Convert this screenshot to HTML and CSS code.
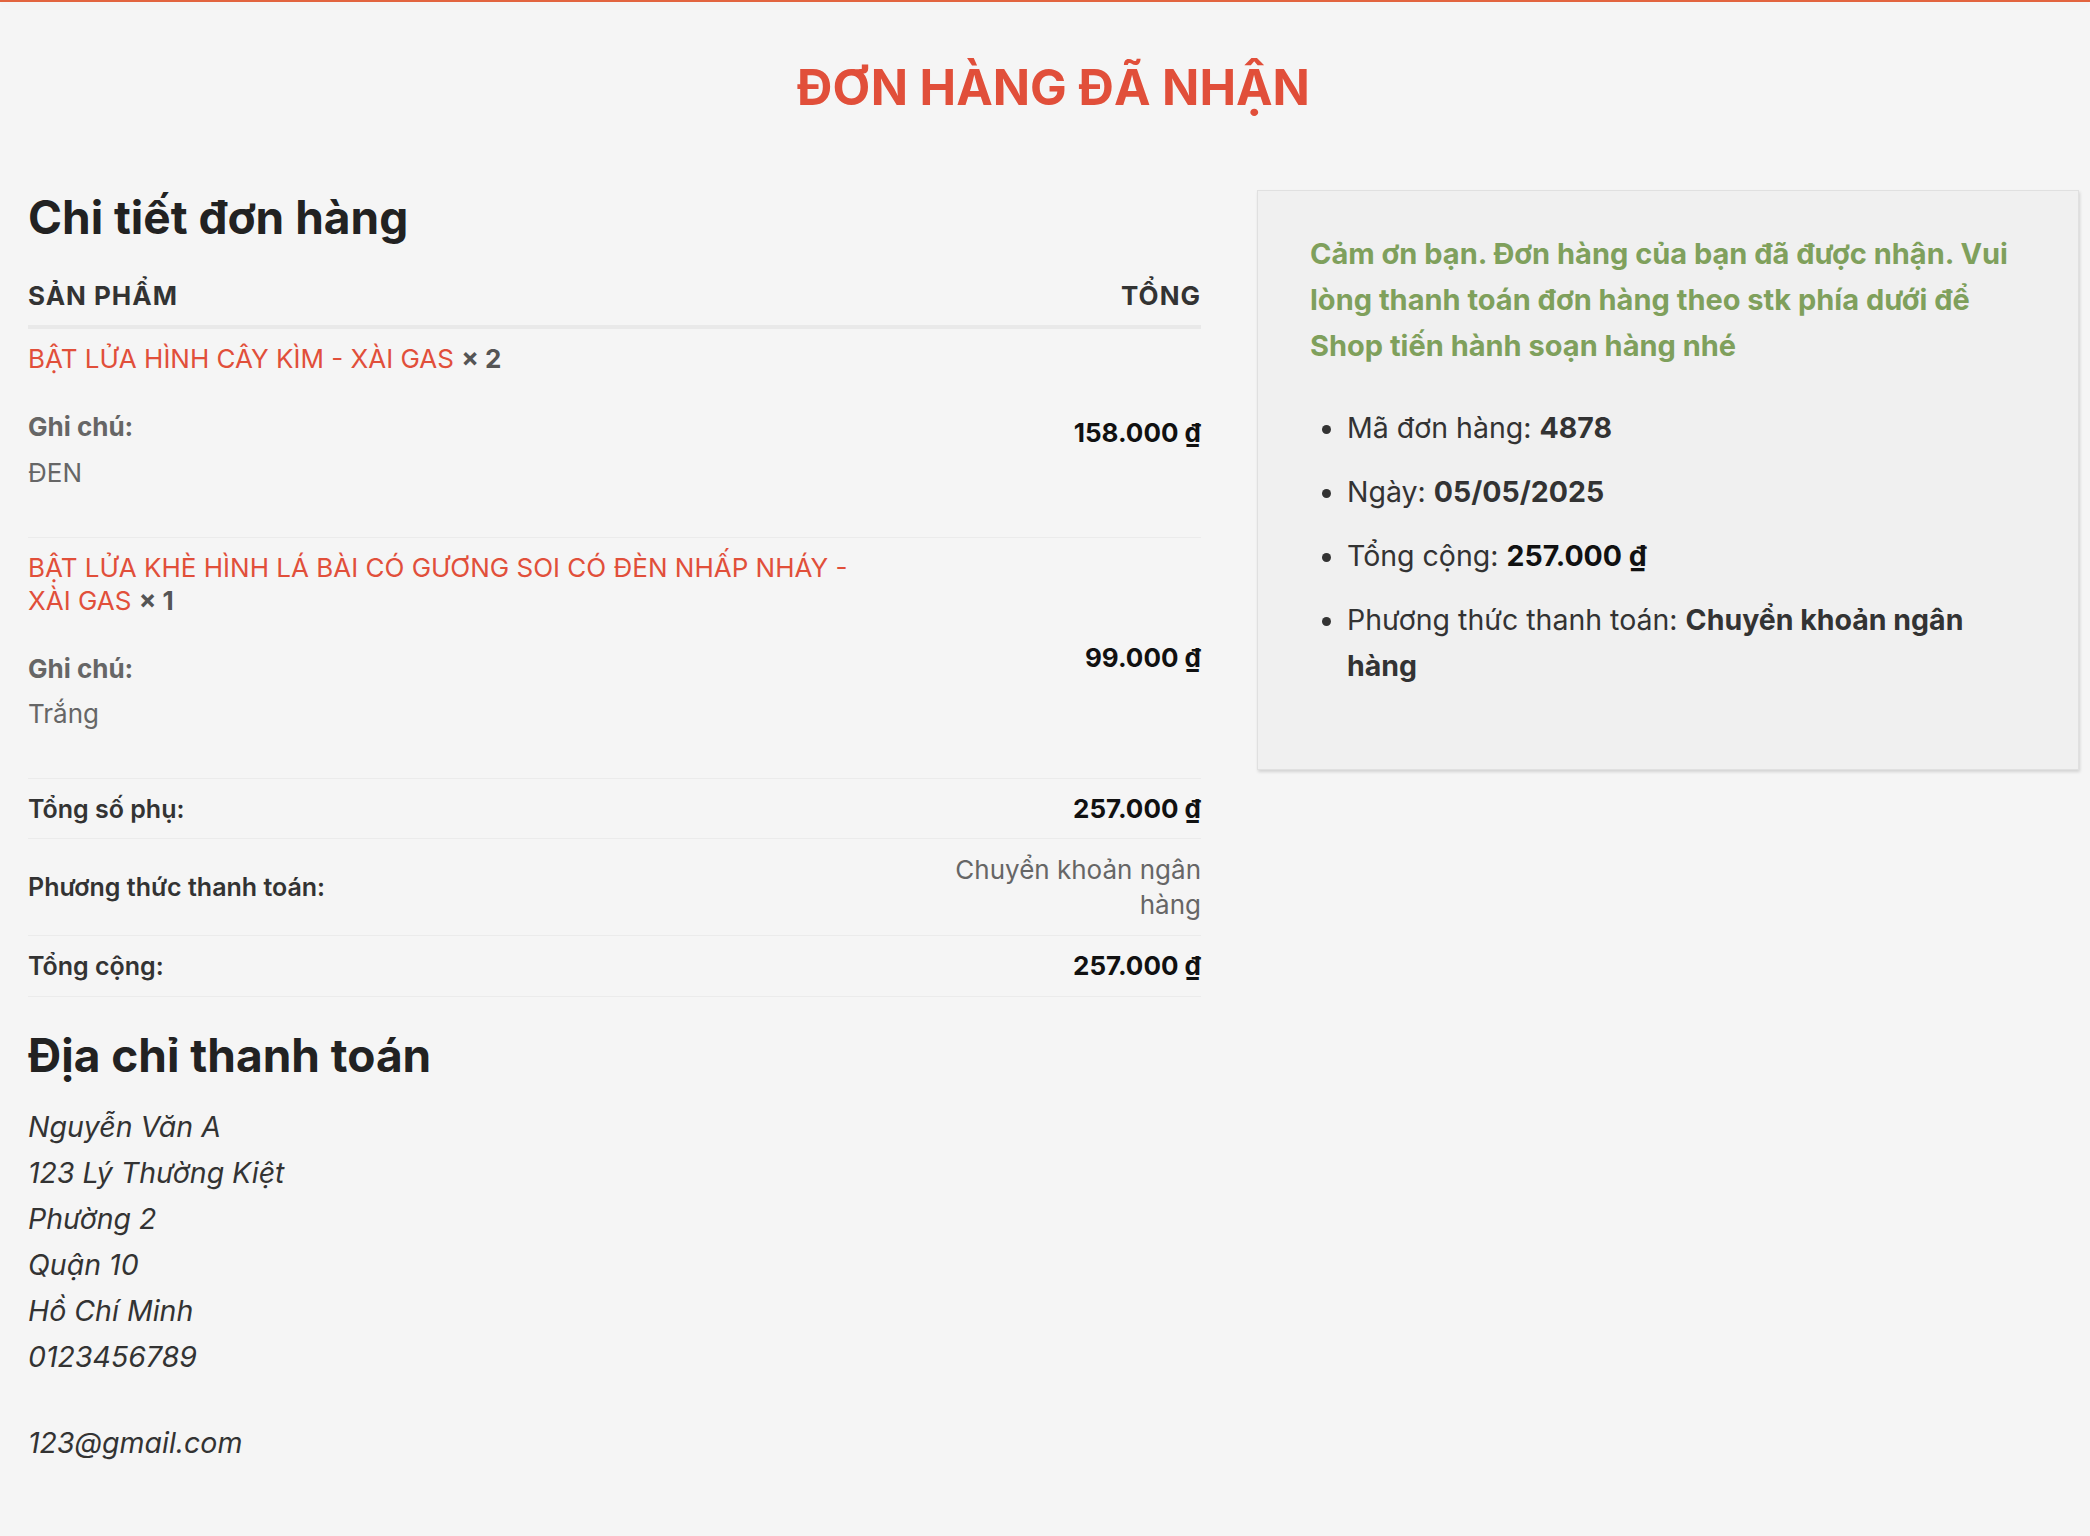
FILE: index.html
```html
<!DOCTYPE html>
<html lang="vi">
<head>
  <meta charset="UTF-8" />
  <meta name="viewport" content="width=device-width, initial-scale=1.0"/>
  <title>Đơn hàng đã nhận</title>
  <link rel="stylesheet" href="styles.css">
</head>
<body>
  <div class="topbar"></div>

  <div class="page">
    <h1 class="page-title">ĐƠN HÀNG ĐÃ NHẬN</h1>

    <div class="order-layout">
      <div class="order-details">
        <h2>Chi tiết đơn hàng</h2>
        <table class="order-table">
          <thead>
            <tr>
              <th class="col-name">Sản phẩm</th>
              <th class="col-total">Tổng</th>
            </tr>
          </thead>
          <tbody>
            <tr class="order-item">
              <td class="col-name">
                <a href="#">BẬT LỬA HÌNH CÂY KÌM - XÀI GAS</a> <strong class="qty">×&nbsp;2</strong>
                <ul class="item-meta">
                  <li><strong>Ghi chú:</strong><p>ĐEN</p></li>
                </ul>
              </td>
              <td class="col-total"><span class="amount">158.000&nbsp;₫</span></td>
            </tr>
            <tr class="order-item">
              <td class="col-name">
                <a href="#">BẬT LỬA KHÈ HÌNH LÁ BÀI CÓ GƯƠNG SOI CÓ ĐÈN NHẤP NHÁY - XÀI GAS</a> <strong class="qty">×&nbsp;1</strong>
                <ul class="item-meta">
                  <li><strong>Ghi chú:</strong><p>Trắng</p></li>
                </ul>
              </td>
              <td class="col-total"><span class="amount">99.000&nbsp;₫</span></td>
            </tr>
          </tbody>
          <tfoot>
            <tr>
              <th>Tổng số phụ:</th>
              <td><span class="amount">257.000&nbsp;₫</span></td>
            </tr>
            <tr>
              <th>Phương thức thanh toán:</th>
              <td class="muted">Chuyển khoản ngân hàng</td>
            </tr>
            <tr>
              <th>Tổng cộng:</th>
              <td><span class="amount">257.000&nbsp;₫</span></td>
            </tr>
          </tfoot>
        </table>

        <h2>Địa chỉ thanh toán</h2>
        <address class="billing">
          Nguyễn Văn A<br>
          123 Lý Thường Kiệt<br>
          Phường 2<br>
          Quận 10<br>
          Hồ Chí Minh<br>
          0123456789
          <p class="billing-email">123@gmail.com</p>
        </address>
      </div>

      <div class="order-summary">
        <p class="thankyou">Cảm ơn bạn. Đơn hàng của bạn đã được nhận. Vui lòng thanh toán đơn hàng theo stk phía dưới để Shop tiến hành soạn hàng nhé</p>
        <ul class="overview">
          <li>Mã đơn hàng: <strong>4878</strong></li>
          <li>Ngày: <strong>05/05/2025</strong></li>
          <li>Tổng cộng: <strong class="amount">257.000&nbsp;₫</strong></li>
          <li>Phương thức thanh toán: <strong>Chuyển khoản ngân hàng</strong></li>
        </ul>
      </div>
    </div>
  </div>
</body>
</html>
```

FILE: styles.css
```css
* { box-sizing: border-box; }
body {
  font-family: 'Inter', 'Noto Sans', sans-serif;
  font-size: 26px;
  line-height: 1.75;
  margin: 0;
  padding: 0;
  background: #f5f5f5;
  color: #333;
}
.topbar {
  height: 2px;
  background: #e2643f;
  box-shadow: 0 2px 12px rgba(0, 0, 0, 0.05);
}
.page {
  padding: 0 11px 60px 28px;
}
.page-title {
  text-align: center;
  color: #e14f3a;
  font-size: 49px;
  font-weight: 700;
  line-height: 1.2;
  margin: 0;
  padding: 57px 0 0;
}
.order-layout {
  display: grid;
  grid-template-columns: 1173px 822px;
  column-gap: 56px;
  align-items: start;
  margin-top: 72px;
}
h2 {
  font-size: 46px;
  font-weight: 700;
  line-height: 1.2;
  color: #222;
  margin: 0 0 21px;
}
.order-table {
  width: 100%;
  border-collapse: collapse;
  line-height: 1.28;
  margin-bottom: 31px;
}
.order-table th,
.order-table td {
  padding: 13px 0;
  text-align: left;
  vertical-align: middle;
}
.order-table thead th {
  font-size: 26px;
  font-weight: 700;
  text-transform: uppercase;
  letter-spacing: 1px;
  color: #333;
  border-bottom: 4px solid #e9e9e9;
}
.order-table .col-name {
  width: 878px;
  padding-right: 38px;
}
.order-table .col-total,
.order-table tfoot td {
  text-align: right;
}
.order-item td {
  border-bottom: 1px solid #ebebeb;
}
.order-item a {
  color: #e14f3a;
  text-decoration: none;
}
.qty {
  color: #555;
  font-weight: 700;
}
.item-meta {
  list-style: none;
  margin: 28.5px 0;
  padding: 0;
  line-height: 1.75;
}
.item-meta strong {
  display: block;
  color: #666;
  font-weight: 700;
}
.item-meta p {
  margin: 0;
  color: #666;
}
.amount {
  font-weight: 700;
  color: #111;
}
.order-table tfoot th,
.order-table tfoot td {
  border-bottom: 1px solid #ebebeb;
}
.order-table tfoot th {
  font-size: 25px;
  font-weight: 600;
  color: #333;
}
.order-table tfoot .muted {
  color: #666;
  line-height: 35px;
}
.billing {
  font-style: italic;
  font-size: 28.5px;
  line-height: 46px;
  color: #333;
  margin-top: 12px;
}
.billing-email {
  margin: 40px 0 0;
}
.order-summary {
  background: #f0f0f0;
  border: 1px solid #e0e0e0;
  box-shadow: 1px 2px 3px rgba(0, 0, 0, 0.14);
  padding: 40px 52px 62px;
  font-size: 28.5px;
  line-height: 46px;
}
.thankyou {
  color: #7fa05c;
  font-size: 29px;
  font-weight: 700;
  margin: 0 0 36px;
}
.overview {
  margin: 0 0 16px;
  padding-left: 37px;
}
.overview li {
  margin-bottom: 18px;
}
.overview strong {
  font-weight: 700;
}
```
